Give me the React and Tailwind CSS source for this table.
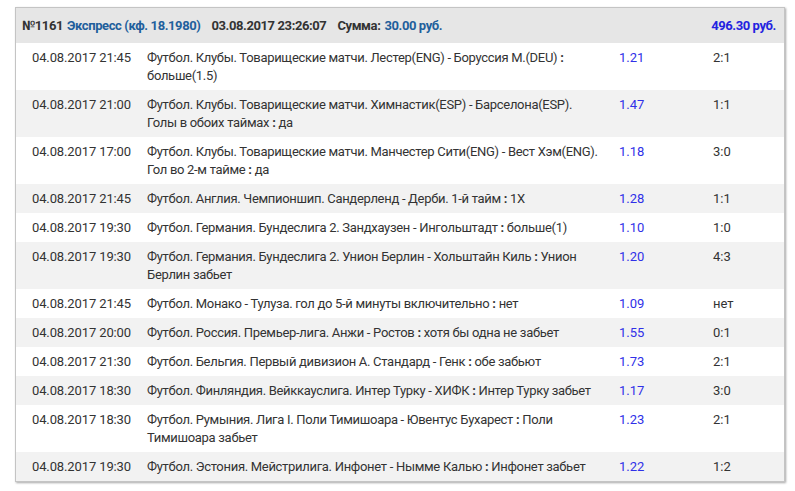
import React from 'react';

const rows = [
    { date: "04.08.2017 21:45", event: "Футбол. Клубы. Товарищеские матчи. Лестер(ENG) - Боруссия М.(DEU)", bet: "больше(1.5)", odds: "1.21", score: "2:1" },
    { date: "04.08.2017 21:00", event: "Футбол. Клубы. Товарищеские матчи. Химнастик(ESP) - Барселона(ESP). Голы в обоих таймах", bet: "да", odds: "1.47", score: "1:1" },
    { date: "04.08.2017 17:00", event: "Футбол. Клубы. Товарищеские матчи. Манчестер Сити(ENG) - Вест Хэм(ENG). Гол во 2-м тайме", bet: "да", odds: "1.18", score: "3:0" },
    { date: "04.08.2017 21:45", event: "Футбол. Англия. Чемпионшип. Сандерленд - Дерби. 1-й тайм", bet: "1X", odds: "1.28", score: "1:1" },
    { date: "04.08.2017 19:30", event: "Футбол. Германия. Бундеслига 2. Зандхаузен - Ингольштадт", bet: "больше(1)", odds: "1.10", score: "1:0" },
    { date: "04.08.2017 19:30", event: "Футбол. Германия. Бундеслига 2. Унион Берлин - Хольштайн Киль", bet: "Унион Берлин забьет", odds: "1.20", score: "4:3" },
    { date: "04.08.2017 21:45", event: "Футбол. Монако - Тулуза. гол до 5-й минуты включительно", bet: "нет", odds: "1.09", score: "нет" },
    { date: "04.08.2017 20:00", event: "Футбол. Россия. Премьер-лига. Анжи - Ростов", bet: "хотя бы одна не забьет", odds: "1.55", score: "0:1" },
    { date: "04.08.2017 21:30", event: "Футбол. Бельгия. Первый дивизион А. Стандард - Генк", bet: "обе забьют", odds: "1.73", score: "2:1" },
    { date: "04.08.2017 18:30", event: "Футбол. Финляндия. Вейккауслига. Интер Турку - ХИФК", bet: "Интер Турку забьет", odds: "1.17", score: "3:0" },
    { date: "04.08.2017 18:30", event: "Футбол. Румыния. Лига I. Поли Тимишоара - Ювентус Бухарест", bet: "Поли Тимишоара забьет", odds: "1.23", score: "2:1" },
    { date: "04.08.2017 19:30", event: "Футбол. Эстония. Мейстрилига. Инфонет - Нымме Калью", bet: "Инфонет забьет", odds: "1.22", score: "1:2" },
];

const App = () => {
    return (
        <div className="min-h-screen bg-white pt-[7px] pl-[15px] text-[13px] leading-[18px] text-[#333]" style={{ fontFamily: "Roboto, 'Liberation Sans', sans-serif" }}>
            <div className="w-[770px] border border-[#c4c4c4] shadow-[1px_1px_2px_rgba(0,0,0,0.35)]">
                {/* Header */}
                <div className="flex h-[35px] items-center justify-between bg-[#e6e6e6] pl-[6px] pr-[8px] font-bold tracking-[-0.4px]">
                    <div className="flex">
                        <span>№1161</span>
                        <span className="ml-[4px] text-[#1f5f9c]">Экспресс (кф. 18.1980)</span>
                        <span className="ml-[11px]">03.08.2017 23:26:07</span>
                        <span className="ml-[11px]">Сумма:</span>
                        <span className="ml-[4px] text-[#1f5f9c]">30.00 руб.</span>
                    </div>
                    <span className="text-[#2323e0]">496.30 руб.</span>
                </div>

                {/* Bets */}
                {rows.map((r, i) => (
                    <div key={i} className={`grid grid-cols-[131px_472px_94px_1fr] pt-[6px] pb-[5px] ${i % 2 === 1 ? "bg-[#f2f2f2]" : "bg-white"}`}>
                        <div className="pl-[16px] tracking-[-0.12px]">{r.date}</div>
                        <div className="pr-[16px] tracking-[-0.3px]">
                            {r.event} <b>:</b> {r.bet}
                        </div>
                        <div className="text-[#3030e8]">{r.odds}</div>
                        <div>{r.score}</div>
                    </div>
                ))}
            </div>
        </div>
    );
};

export default App;
